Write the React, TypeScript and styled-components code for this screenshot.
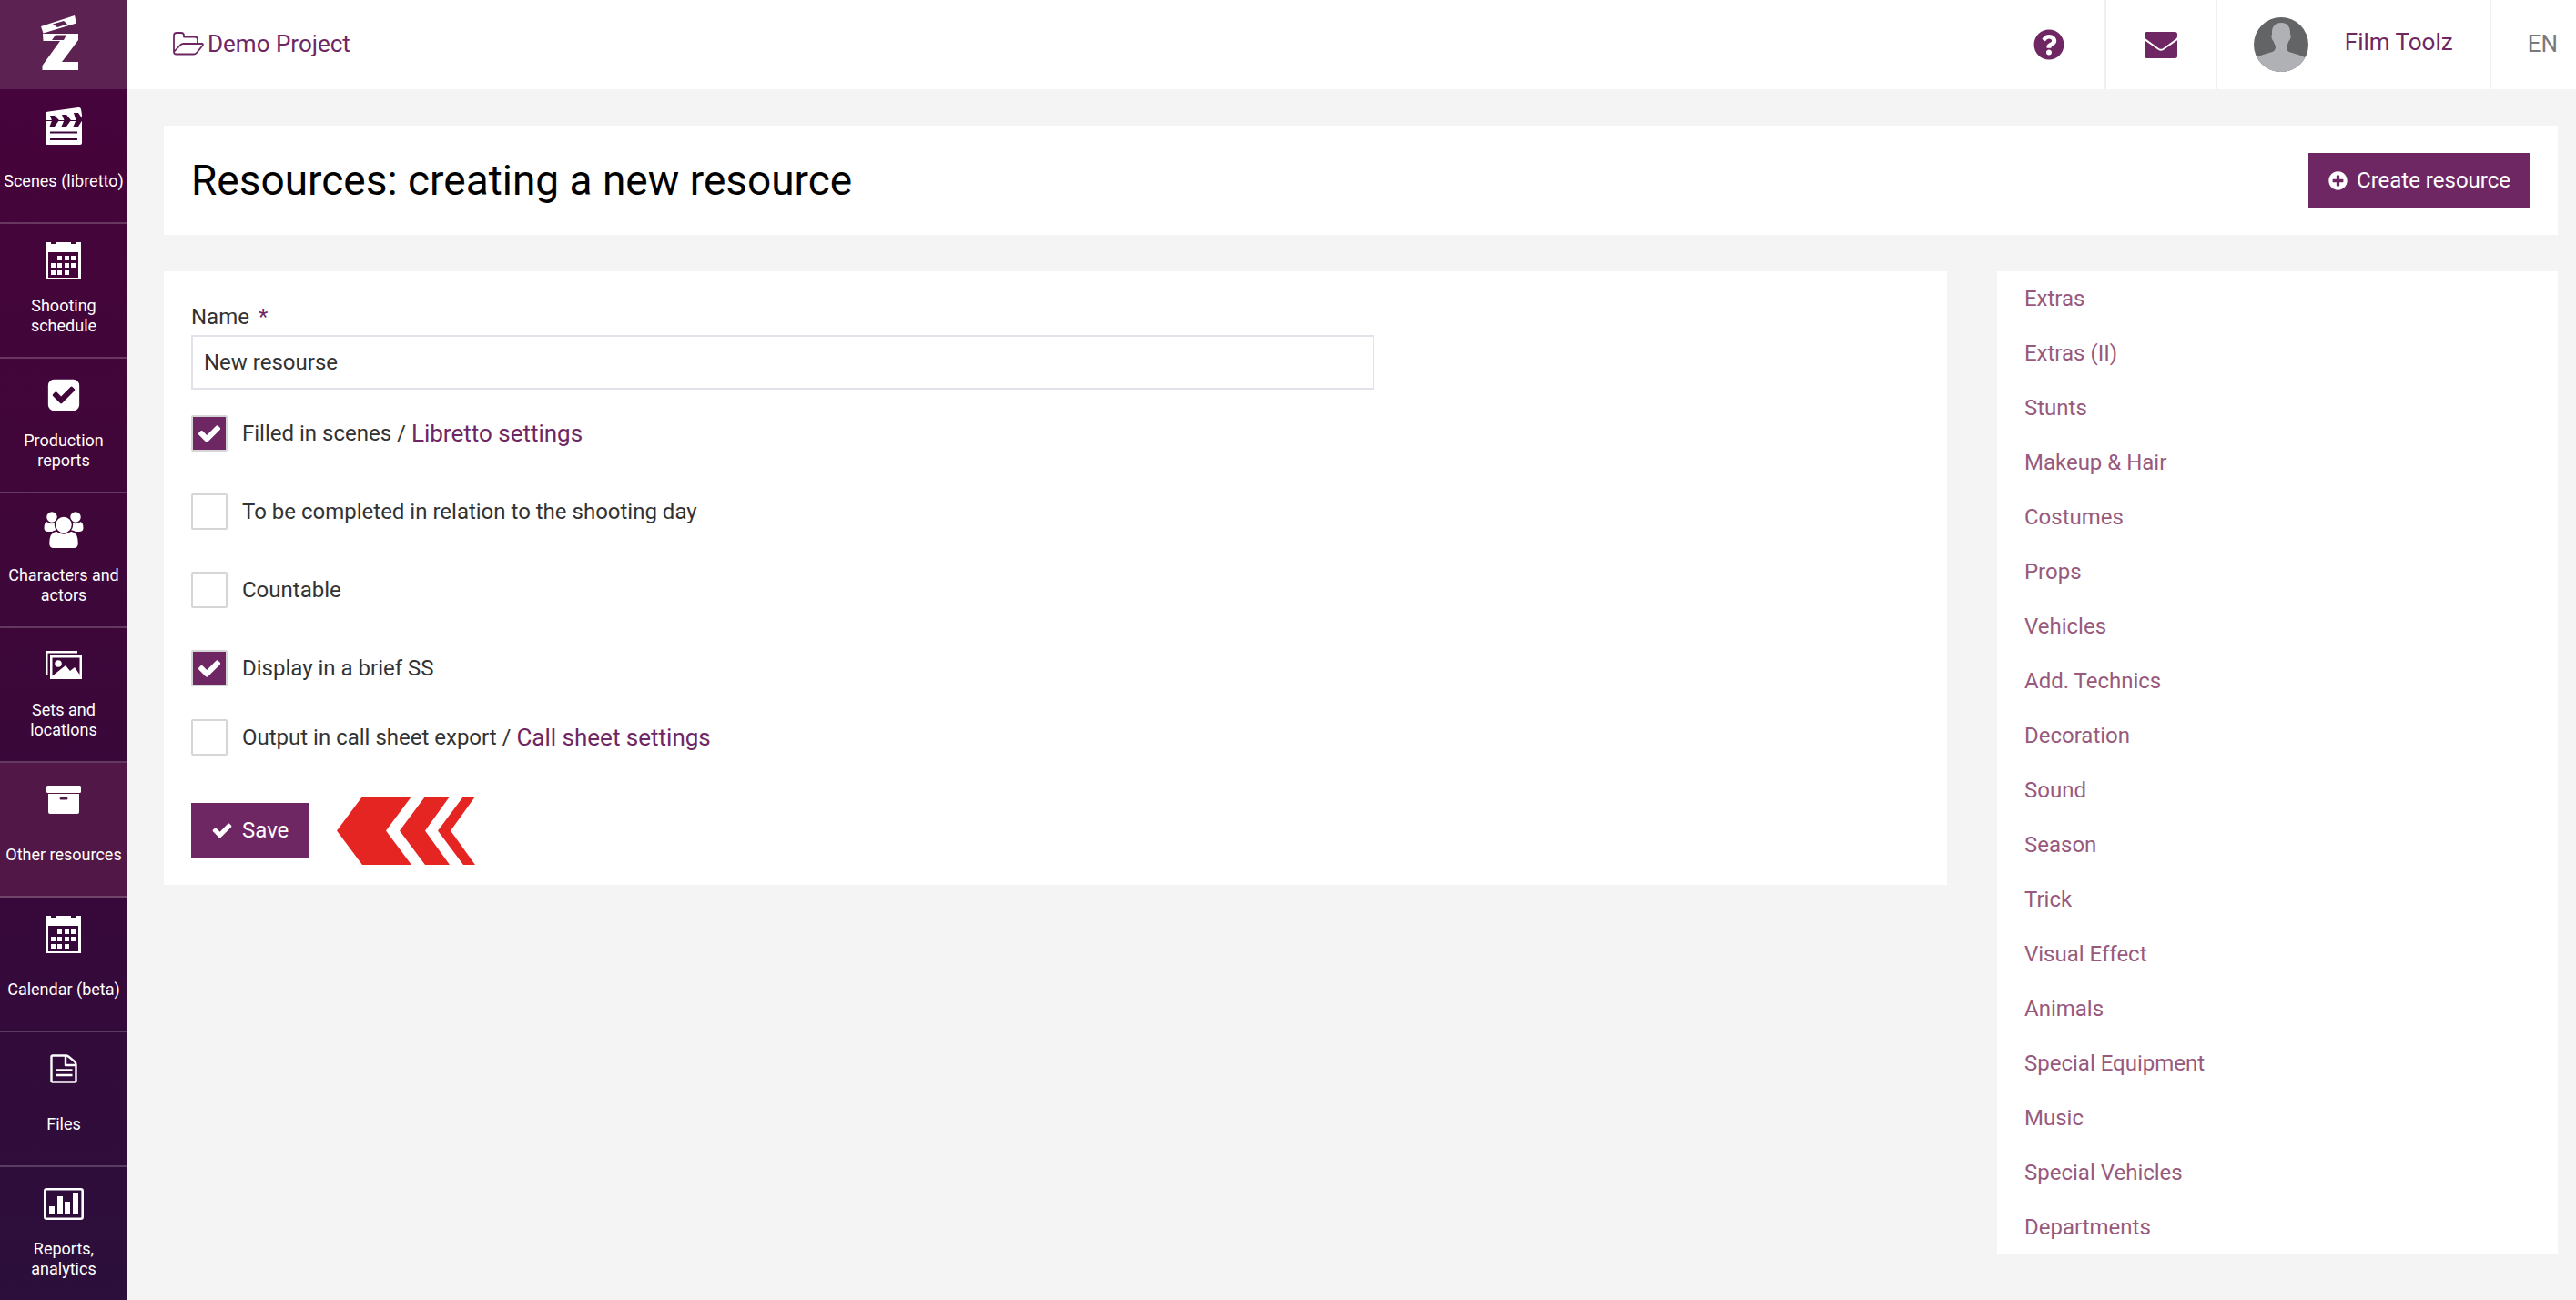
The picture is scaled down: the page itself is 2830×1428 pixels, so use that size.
import React, { useState } from "react";
import styled, { createGlobalStyle, css } from "styled-components";
import { FaPlusCircle, FaQuestionCircle } from "react-icons/fa";

const purple = "#6f2764";
const plum = "#410639";

const GlobalStyle = createGlobalStyle`
  *, *::before, *::after { box-sizing: border-box; }
  body {
    margin: 0;
    background: #f4f4f4;
    color: #333;
    font-family: Roboto, "Noto Sans", sans-serif;
    font-size: 24px;
    line-height: 30px;
  }
  a { text-decoration: none; }
  svg { display: block; flex: none; }
`;

const Shell = styled.div`
  display: flex;
  min-height: 100vh;
`;

const Sidebar = styled.nav`
  flex: none;
  width: 140px;
  background: linear-gradient(#45043b 7%, #410639 35%, #38083a 65%, #2c0f3b 100%);
`;

const LogoLink = styled.a`
  display: flex;
  align-items: center;
  justify-content: center;
  height: 98px;
  padding: 0 8px 2px 0;
  background: rgba(255, 255, 255, 0.12);
`;

const NavLink = styled.a<{ $active?: boolean }>`
  display: flex;
  flex-direction: column;
  align-items: center;
  height: 148px;
  padding-top: 16px;
  border-bottom: 2px solid rgba(255, 255, 255, 0.2);
  color: #fff;
  ${(p) => p.$active && css`background: #511747;`}
`;

const NavIcon = styled.span`
  display: flex;
  align-items: center;
  justify-content: center;
  width: 48px;
  height: 48px;
`;

const NavLabel = styled.span`
  display: flex;
  align-items: center;
  height: 74px;
  font-size: 18px;
  line-height: 22px;
  text-align: center;
  white-space: nowrap;
`;

const Page = styled.div`
  flex: 1;
  min-width: 0;
`;

const TopBar = styled.header`
  display: flex;
  justify-content: space-between;
  height: 98px;
  padding-left: 50px;
  background: #fff;
`;

const ProjectLink = styled.a`
  display: flex;
  align-items: center;
  gap: 4px;
  padding-bottom: 2px;
  color: ${purple};
  font-size: 26px;
`;

const TopActions = styled.div`
  display: flex;
`;

const TopItem = styled.a`
  display: flex;
  align-items: center;
  padding: 0 40px;
  color: ${purple};
  font-size: 26px;
  & + & { border-left: 2px solid #f0f0f0; }
`;

const IconItem = styled(TopItem)`
  justify-content: center;
  width: 122px;
  padding: 0;
`;

const LanguageItem = styled(TopItem)`
  padding: 0 20px 2px 40px;
  color: #7a7a7a;
`;

const UserName = styled.span`
  padding: 0 0 6px 40px;
`;

const Content = styled.main`
  padding: 40px 20px 50px 40px;
`;

const TitlePanel = styled.section`
  display: flex;
  align-items: center;
  justify-content: space-between;
  padding: 30px;
  background: #fff;
`;

const Title = styled.h1`
  margin: 0;
  color: #000;
  font-size: 46px;
  font-weight: 400;
  line-height: 60px;
`;

const Button = styled.button`
  display: inline-flex;
  align-items: center;
  gap: 10px;
  height: 60px;
  padding: 0 22px;
  border: 0;
  background: ${purple};
  color: #fff;
  font: 24px/30px Roboto, "Noto Sans", sans-serif;
`;

const Columns = styled.div`
  display: grid;
  grid-template-columns: minmax(0, 318fr) minmax(0, 100fr);
  align-items: start;
  gap: 55px;
  margin-top: 40px;
`;

const FormPanel = styled.form`
  padding: 30px;
  background: #fff;
`;

const FieldLabel = styled.label`
  display: block;
  padding: 5px 0;
`;

const Required = styled.span`
  margin-left: 10px;
  color: ${purple};
`;

const TextInput = styled.input`
  display: block;
  width: 100%;
  max-width: 1300px;
  height: 60px;
  padding: 0 12px;
  border: 2px solid #e2e2ea;
  background: #fff;
  color: #333;
  font: 24px/30px Roboto, "Noto Sans", sans-serif;
`;

const Options = styled.div`
  padding: 28px 0 52px;
`;

const OptionRow = styled.div<{ $gap: number }>`
  display: flex;
  align-items: center;
  margin-top: ${(p) => p.$gap}px;
`;

const OptionLabel = styled.label`
  display: flex;
  align-items: center;
  gap: 16px;
  white-space: pre;
`;

const Tick = styled.span`
  display: grid;
  width: 40px;
  height: 40px;
  & > * { grid-area: 1 / 1; }
  & > svg { place-self: center; color: #fff; pointer-events: none; }
`;

const TickBox = styled.input`
  appearance: none;
  width: 40px;
  height: 40px;
  margin: 0;
  border: 2px solid #d6d6d6;
  border-radius: 2px;
  background: #fff;
  &:checked { background: ${purple}; }
`;

const SettingsLink = styled.a`
  color: ${purple};
  font-size: 26px;
`;

const SaveRow = styled.div`
  display: flex;
  align-items: center;
  gap: 31px;
  height: 60px;
`;

const ResourceList = styled.ul`
  margin: 0;
  padding: 0 30px;
  background: #fff;
  list-style: none;
`;

const ResourceLink = styled.a`
  display: block;
  padding: 15px 0;
  color: #985a7c;
`;

const Logo = () => (
  <svg width="42" height="62" viewBox="0 0 42 62" fill="#fff" aria-hidden="true">
    <path fillRule="evenodd" d="M0 12 37 0l2 8.500L2.500 19.500zM13 9.500l5 3.500 11-3.500-4-3.500z" />
    <path fillRule="evenodd" d="M2 20h39v7L23 51h18v9H1.500v-5L21 28H2.500zM16 21.500 12 27h13l3-5.500z" />
  </svg>
);

const Clapper = () => (
  <svg width="42" height="42" viewBox="0 0 42 42" aria-hidden="true">
    <path fill="#fff" d="M1 8q0-2 2-2.300L37 1q2.500-.5 3 2l1 6v31q0 2-2 2H3q-2 0-2-2z" />
    <path fill={plum} d="M6 10h5l5 5-5 7H5.500L8 15.500zM19 9h5l5 6-5 7h-5.500l3-7zM32 7h5l5 7-5 8h-5.500l3-7zM0 15h42v1H0zM6 27.500h30v2H6zM6 35h30v2H6z" />
  </svg>
);

const CalendarGrid = () => (
  <svg width="38" height="41" viewBox="0 0 38 41" fill="#fff" shapeRendering="crispEdges" aria-hidden="true">
    <path fillRule="evenodd" d="M0 0h5v2h5V0h17v2h5V0h6v41H0zM2 11v28h33V11z" />
    {[[12, 15], [20, 15], [27, 15], [5, 23], [12, 23], [20, 23], [27, 23], [5, 31], [12, 31], [20, 31]].map(
      ([x, y]) => <rect key={`${x}-${y}`} x={x} y={y} width="5" height="5" />
    )}
  </svg>
);

const CheckSquare = () => (
  <svg width="40" height="40" viewBox="0 0 1792 1792" fill="#fff" aria-hidden="true">
    <path d="M813 1299l614-614q19-19 19-45t-19-45l-102-102q-19-19-45-19t-45 19l-467 467-211-211q-19-19-45-19t-45 19l-102 102q-19 19-19 45t19 45l358 358q19 19 45 19t45-19zm851-883v960q0 119-84.500 203.500t-203.500 84.500h-960q-119 0-203.500-84.500t-84.500-203.500v-960q0-119 84.500-203.500t203.500-84.500h960q119 0 203.500 84.500t84.500 203.500z" />
  </svg>
);

const Check = ({ size }: { size: number }) => (
  <svg width={size} height={size} viewBox="0 0 1792 1792" fill="#fff" aria-hidden="true">
    <path d="M1671 566q0 40-28 68l-724 724-136 136q-28 28-68 28t-68-28l-136-136-362-362q-28-28-28-68t28-68l136-136q28-28 68-28t68 28l294 295 656-657q28-28 68-28t68 28l136 136q28 28 28 68z" />
  </svg>
);

const People = () => (
  <svg width="44" height="42" viewBox="0 0 44 42" fill="#fff" stroke={plum} strokeWidth="1.500" aria-hidden="true">
    <path stroke="none" d="M4 12q5 3 10 0h3v11H5q-4.500 0-4.500-4Q.500 12.500 4 12zM40 12q-5 3-10 0h-3v11h12q4.500 0 4.500-4 0-6.500-3.500-7z" />
    <circle cx="9" cy="7" r="6.500" />
    <circle cx="35" cy="7" r="6.500" />
    <path d="M14 22q8 5 16 0 8.500 1 8.500 14 0 5.800-5.500 5.800H11q-5.500 0-5.500-5.800 0-13 8.500-14z" />
    <circle cx="22" cy="15.500" r="9.500" />
  </svg>
);

const Images = () => (
  <svg width="40" height="31" viewBox="0 0 40 31" fill="#fff" aria-hidden="true">
    <path d="M0 0h35v2.500H2.500V26H0z" />
    <path fillRule="evenodd" d="M5 5h35v26H5zM7.500 7.500v20L22 16l5 6 5-4 5.500 8V7.500z" />
    <circle cx="14" cy="14" r="3.800" />
  </svg>
);

const ArchiveBox = () => (
  <svg width="38" height="31" viewBox="0 0 38 31" fill="#fff" aria-hidden="true">
    <rect width="38" height="8" rx="1.500" />
    <path fillRule="evenodd" d="M2 9h34v20q0 2-2 2H4q-2 0-2-2zm14 4q-1.500 0-1.500 1.200T16 15.500h6q1.500 0 1.500-1.300T22 13z" />
  </svg>
);

const Document = () => (
  <svg width="30" height="32" viewBox="0 0 30 32" fill="none" stroke="#fff" strokeWidth="2.400" strokeLinejoin="round" aria-hidden="true">
    <path d="M3 1.500h14q2 0 3.500 1.200l6 5q2 1.500 2 4V29q0 1.500-1.500 1.500H3q-1.500 0-1.500-1.500V3Q1.500 1.500 3 1.500z" />
    <path d="M17 1.500V12h11.500M6.500 17.500h18M6.500 23h18" />
  </svg>
);

const BarChart = () => (
  <svg width="44" height="35" viewBox="0 0 44 35" fill="#fff" aria-hidden="true">
    <rect x="1.300" y="1.300" width="41.400" height="32.400" rx="2" fill="none" stroke="#fff" strokeWidth="2.600" />
    <path d="M6 20h6v9H6zM15 9h6v20h-6zM23 15h6v14h-6zM32 6h6v23h-6z" />
  </svg>
);

const FolderOpen = () => (
  <svg width="34" height="26" viewBox="0 0 34 26" fill="none" stroke={purple} strokeWidth="1.800" strokeLinejoin="round" aria-hidden="true">
    <path d="M1 22V4q0-3 3-3h5q3 0 3 3v1.500h12q3 0 3 3V13M1 22l7-7.500Q9.500 13 11.500 13H32q1.500 0 .5 2l-6 7.500Q25 24.500 23 24.500H3.500Q1 24.500 1 22z" />
  </svg>
);

const Envelope = () => (
  <svg width="36" height="29" viewBox="0 0 36 29" fill={purple} aria-hidden="true">
    <path d="M2.500 0h31Q36 0 36 2.500V5q0 1.500-1.500 2.700L20 18.200q-2 1.300-4 0L1.500 7.700Q0 6.500 0 5V2.500Q0 0 2.500 0z" />
    <path d="M0 9.200l15 10.600q3 2 6 0L36 9.200v17.300q0 2.500-2.500 2.500h-31Q0 29 0 26.500z" />
  </svg>
);

const Avatar = () => (
  <svg width="60" height="60" viewBox="0 0 60 60" role="img" aria-label="User photo">
    <clipPath id="avatar-round"><circle cx="30" cy="30" r="30" /></clipPath>
    <g clipPath="url(#avatar-round)">
      <path fill="#636466" d="M0 0h60v60H0z" />
      <path fill="#b0b1b4" d="M30 6c7 0 10 5 10 10v3c2 1 0 6-1.500 7-1 3-2 4-2.500 6 0 5 2 6 6 7 6 2 11 3 14 5v16H3V44c3-2 8-3 14-5 4-1 7-2 7-7-.5-2-1.500-3-2.500-6-1.500-1-3-6-1.500-7v-3c0-5 3-10 10-10z" />
    </g>
  </svg>
);

const Arrows = () => (
  <svg width="152" height="75" viewBox="0 0 152 75" fill="#e52521" aria-hidden="true">
    <path d="M28 0h54L54 37.500 82 75H28L0 37.500zM97 0h27L97 37.500 124 75H97L69 37.500zM139 0h13l-27 37.500L152 75h-13l-28-37.500z" />
  </svg>
);

const navItems: { label: React.ReactNode; icon: React.ReactNode; active?: boolean }[] = [
  { label: "Scenes (libretto)", icon: <Clapper /> },
  { label: <>Shooting<br />schedule</>, icon: <CalendarGrid /> },
  { label: <>Production<br />reports</>, icon: <CheckSquare /> },
  { label: <>Characters and<br />actors</>, icon: <People /> },
  { label: <>Sets and<br />locations</>, icon: <Images /> },
  { label: "Other resources", icon: <ArchiveBox />, active: true },
  { label: "Calendar (beta)", icon: <CalendarGrid /> },
  { label: "Files", icon: <Document /> },
  { label: <>Reports,<br />analytics</>, icon: <BarChart /> },
];

const resources = [
  "Extras", "Extras (II)", "Stunts", "Makeup & Hair", "Costumes", "Props",
  "Vehicles", "Add. Technics", "Decoration", "Sound", "Season", "Trick",
  "Visual Effect", "Animals", "Special Equipment", "Music", "Special Vehicles", "Departments",
];

const options: { id: string; label: string; gap: number; link?: string; checked?: boolean }[] = [
  { id: "scenes", label: "Filled in scenes / ", link: "Libretto settings", checked: true, gap: 0 },
  { id: "day", label: "To be completed in relation to the shooting day", gap: 46 },
  { id: "countable", label: "Countable", gap: 46 },
  { id: "brief", label: "Display in a brief SS", checked: true, gap: 46 },
  { id: "callsheet", label: "Output in call sheet export / ", link: "Call sheet settings", gap: 36 },
];

function Option({ id, label, link, gap, checked = false }: (typeof options)[number]) {
  const [on, setOn] = useState(checked);
  return (
    <OptionRow $gap={gap}>
      <OptionLabel htmlFor={id}>
        <Tick>
          <TickBox id={id} type="checkbox" checked={on} onChange={(e) => setOn(e.target.checked)} />
          {on && <Check size={28} />}
        </Tick>
        {label}
      </OptionLabel>
      {link && <SettingsLink href="#">{link}</SettingsLink>}
    </OptionRow>
  );
}

export default function App() {
  return (
    <>
      <GlobalStyle />
      <Shell>
        <Sidebar>
          <LogoLink href="#" aria-label="Home"><Logo /></LogoLink>
          {navItems.map((item, i) => (
            <NavLink key={i} href="#" $active={item.active}>
              <NavIcon>{item.icon}</NavIcon>
              <NavLabel><span>{item.label}</span></NavLabel>
            </NavLink>
          ))}
        </Sidebar>
        <Page>
          <TopBar>
            <ProjectLink href="#"><FolderOpen />Demo Project</ProjectLink>
            <TopActions>
              <IconItem href="#" aria-label="Help"><FaQuestionCircle size={34} /></IconItem>
              <IconItem href="#" aria-label="Messages"><Envelope /></IconItem>
              <TopItem href="#"><Avatar /><UserName>Film Toolz</UserName></TopItem>
              <LanguageItem href="#">EN</LanguageItem>
            </TopActions>
          </TopBar>
          <Content>
            <TitlePanel>
              <Title>Resources: creating a new resource</Title>
              <Button type="button"><FaPlusCircle size={21} />Create resource</Button>
            </TitlePanel>
            <Columns>
              <FormPanel onSubmit={(e) => e.preventDefault()}>
                <FieldLabel htmlFor="name">Name<Required>*</Required></FieldLabel>
                <TextInput id="name" type="text" defaultValue="New resourse" />
                <Options>
                  {options.map((o) => <Option key={o.id} {...o} />)}
                </Options>
                <SaveRow>
                  <Button type="submit"><Check size={24} />Save</Button>
                  <Arrows />
                </SaveRow>
              </FormPanel>
              <ResourceList>
                {resources.map((r) => (
                  <li key={r}><ResourceLink href="#">{r}</ResourceLink></li>
                ))}
              </ResourceList>
            </Columns>
          </Content>
        </Page>
      </Shell>
    </>
  );
}
